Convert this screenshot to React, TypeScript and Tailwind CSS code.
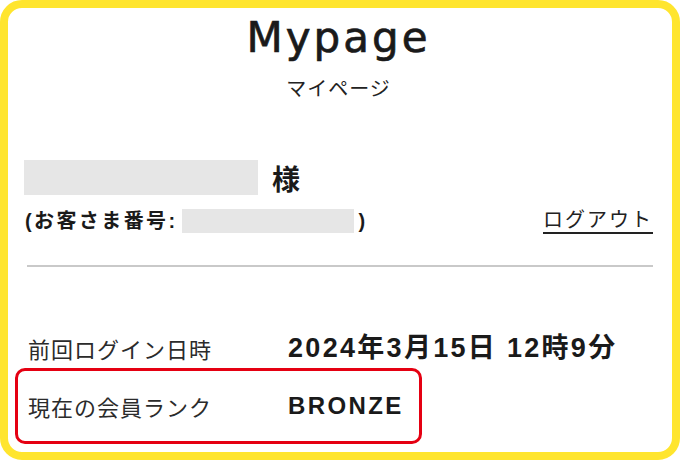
const jp = "font-['Noto_Sans_CJK_JP',sans-serif]";
const latinJp = "font-['Liberation_Sans','Noto_Sans_CJK_JP',sans-serif]";

function InfoRow({
  label,
  value,
  highlight,
}: {
  label: string;
  value: string;
  highlight?: boolean;
}) {
  return (
    <div
      className={
        "-ml-[9px] flex items-center rounded-[10px] border-[3px] pl-[10px] " +
        (highlight ? "h-[76px] w-[407px] border-[#e50012]" : "h-[40px] border-transparent")
      }
    >
      <span className={`${jp} w-[260px] shrink-0 text-[22px] leading-none tracking-[1px] text-[#2b2b2b]`}>
        {label}
      </span>
      <span
        className={
          `${latinJp} font-bold leading-none text-[#1a1a1a] ` +
          (highlight ? "text-[24px] tracking-[2.4px]" : "text-[27px] tracking-[2.3px]")
        }
      >
        {value}
      </span>
    </div>
  );
}

export default function App() {
  return (
    <div className="h-[460px] w-[680px] bg-white">
      <div className="flex h-full flex-col rounded-[22px] border-[8px] border-[#ffe52e] bg-white pl-[16px] pr-[19px]">
        {/* ─── title ─── */}
        <h1 className="mt-[9px] text-center font-['DejaVu_Sans',sans-serif] text-[42px] leading-[42px] tracking-[3px] text-[#1a1a1a] [-webkit-text-stroke:0.7px_#1a1a1a]">
          Mypage
        </h1>
        <p className={`${jp} mt-[19px] text-center text-[20px] leading-[20px] tracking-[1px] text-[#222]`}>
          マイページ
        </p>

        {/* ─── customer ─── */}
        <div className="mt-[62px] flex h-[35px] items-center">
          <div className="h-[35px] w-[234px] bg-[#e6e6e6]" />
          <span className={`${jp} ml-[14px] text-[28px] font-bold leading-none text-[#1a1a1a]`}>様</span>
        </div>
        <div className="mt-[14px] flex h-[24px] items-center justify-between">
          <div className="flex items-center">
            <span className={`${latinJp} ml-[1px] text-[20px] font-bold leading-none tracking-[2.4px] text-[#1a1a1a]`}>
              (お客さま番号:
            </span>
            <div className="ml-[4px] h-[24px] w-[172px] bg-[#e6e6e6]" />
            <span className={`${latinJp} ml-[5px] text-[20px] font-bold leading-none text-[#1a1a1a]`}>)</span>
          </div>
          <a
            href="#"
            className={`${jp} -mt-[4px] text-[20px] leading-none tracking-[2px] text-[#222] underline underline-offset-[5px]`}
          >
            ログアウト
          </a>
        </div>

        <div className="ml-[3px] mt-[32px] h-[2px] bg-[#c9c9c9]" />

        {/* ─── status ─── */}
        <div className="mt-[61px]">
          <InfoRow label="前回ログイン日時" value="2024年3月15日 12時9分" />
          <InfoRow label="現在の会員ランク" value="BRONZE" highlight />
        </div>
      </div>
    </div>
  );
}
